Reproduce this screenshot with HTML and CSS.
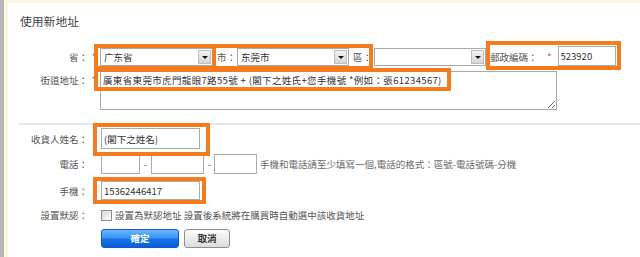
FILE: index.html
```html
<!DOCTYPE html>
<html lang="zh-Hant">
<head>
<meta charset="utf-8">
<title>使用新地址</title>
<link rel="stylesheet" href="styles.css">
</head>
<body>
<div class="frame">
  <div class="page">
    <h2 class="title">使用新地址</h2>

    <div class="row r1">
      <span class="label">省：</span><span class="star">*</span>
      <div class="select s1"><span class="val">广东省</span><span class="arrow"></span></div>
      <span class="sublabel">市：</span>
      <div class="select s2"><span class="val">东莞市</span><span class="arrow"></span></div>
      <span class="sublabel">區：</span>
      <div class="select s3"><span class="val"></span><span class="arrow"></span></div>
      <span class="sublabel zip">郵政編碼：</span><span class="star zipstar">*</span>
      <input class="inp zipinp" type="text" value="523920">
    </div>

    <div class="row r2">
      <span class="label">街道地址：</span><span class="star">*</span>
      <textarea class="street">廣東省東莞市虎門龍眼7路55號 + (閣下之姓氏+您手機號 *例如：張61234567)</textarea>
    </div>

    <div class="sep"></div>

    <div class="row r3">
      <span class="label">收貨人姓名：</span><span class="star"></span>
      <input class="inp name" type="text" value="(閣下之姓名)">
    </div>

    <div class="row r4">
      <span class="label">電話：</span><span class="star"></span>
      <input class="inp ph1" type="text">
      <span class="dash">-</span>
      <input class="inp ph2" type="text">
      <span class="dash">-</span>
      <input class="inp ph3" type="text">
      <span class="hint">手機和電話請至少填寫一個,電話的格式：區號-電話號碼-分機</span>
    </div>

    <div class="row r5">
      <span class="label">手機：</span><span class="star"></span>
      <input class="inp mobile" type="text" value="15362446417">
    </div>

    <div class="row r6">
      <span class="label">設置默認：</span><span class="star"></span>
      <input class="chk" type="checkbox">
      <span class="chktext">設置為默認地址 設置後系統將在購買時自動選中該收貨地址</span>
    </div>

    <div class="row r7">
      <span class="label"></span><span class="star"></span>
      <button class="btn ok">確定</button>
      <button class="btn cancel">取消</button>
    </div>
  </div>

  <span class="mark m1"></span>
  <span class="mark m2"></span>
  <span class="mark m3"></span>
  <span class="mark m4"></span>
  <span class="mark m5"></span>
  <span class="mark m6"></span>
</div>
</body>
</html>
```

FILE: styles.css
```css
* { box-sizing: border-box; }

html, body {
  margin: 0;
  background: #fff;
}

body {
  font-family: "Noto Sans CJK TC", "Noto Sans CJK SC", "Liberation Sans", sans-serif;
  font-size: 9.5px;
  color: #555;
}

.frame {
  position: relative;
  height: 257px;
  overflow: hidden;
  border-left: 4px solid #b6b6b6;
}

.page {
  height: 100%;
  border-left: 4px solid #fdf6e1;
  border-top: 3px solid #fdf6e1;
}

.title {
  margin: 10px 0 0 12px;
  font-size: 11.8px;
  font-weight: normal;
  line-height: 16px;
  color: #444;
}

.row {
  display: flex;
  align-items: center;
}

.label {
  flex: none;
  width: 80px;
  text-align: right;
  line-height: 16px;
  white-space: nowrap;
}

.star {
  flex: none;
  width: 12px;
  text-align: center;
  color: #e5493a;
  line-height: 16px;
}

/* row 1 */
.r1 {
  margin-top: 17px;
  height: 20px;
  align-items: flex-end;
}
.r1 .label, .r1 .star, .r1 .sublabel { line-height: 18px; }

.select {
  flex: none;
  display: flex;
  align-items: center;
  height: 18px;
  border: 1px solid #a9a9a9;
  background: #fff;
}
.s1 { width: 113px; }
.s2 { width: 112px; }
.s3 { width: 112px; }

.select .val {
  flex: 1;
  padding-left: 3px;
  color: #333;
  line-height: 16px;
  white-space: nowrap;
}

.arrow {
  flex: none;
  width: 13px;
  height: 14px;
  margin-right: 1px;
  border: 1px solid #bdbdbd;
  background: linear-gradient(#f3f3f3, #d6d6d6);
  display: flex;
  align-items: center;
  justify-content: center;
}
.arrow::after {
  content: "";
  border-left: 3px solid transparent;
  border-right: 3px solid transparent;
  border-top: 3px solid #111;
}

.sublabel {
  flex: none;
  padding-left: 4px;
  width: 24px;
  white-space: nowrap;
}
.sublabel + .s3 { margin-left: 1px; }
.zip { width: auto; }
.zipstar {
  width: 20px;
  text-align: right;
  padding-right: 6px;
  line-height: 18px;
}

.inp {
  flex: none;
  margin: 0;
  border: 1px solid #aaa;
  padding: 0 2px;
  font: inherit;
  color: #333;
  background: #fff;
  outline: none;
}
.zipinp { width: 58px; height: 20px; }

/* row 2 */
.r2 {
  margin-top: 5px;
  align-items: flex-start;
}
.r2 .label, .r2 .star { padding-top: 1px; }

.street {
  flex: none;
  display: block;
  margin: 0;
  width: 457px;
  height: 39px;
  border: 1px solid #aaa;
  padding: 1px 2px;
  font: inherit;
  line-height: 14px;
  letter-spacing: 0.35px;
  color: #333;
  resize: both;
  overflow: hidden;
  white-space: nowrap;
}

.sep {
  margin: 13px 0 0 10px;
  height: 2px;
  background: #e8e8e8;
}

/* row 3 */
.r3 { margin-top: 3px; height: 21px; }
.name { width: 99px; height: 21px; margin-left: 1px; }

/* row 4 */
.r4 { margin-top: 5px; height: 20px; }
.ph1 { width: 39px; height: 20px; margin-left: 1px; }
.ph2 { width: 53px; height: 20px; }
.ph3 { width: 43px; height: 20px; }
.dash {
  flex: none;
  width: 11px;
  text-align: center;
  color: #666;
}
.dash + .ph3 { margin-left: -1px; }
.hint {
  margin-left: 3px;
  color: #6a6a6a;
  white-space: nowrap;
}

/* row 5 */
.r5 { margin-top: 7px; height: 19px; }
.mobile { width: 99px; height: 19px; margin-left: 1px; }

/* row 6 */
.r6 { margin-top: 8px; height: 14px; }
.chk {
  appearance: none;
  -webkit-appearance: none;
  flex: none;
  margin: 0 0 0 1px;
  width: 11px;
  height: 11px;
  border: 1px solid #8f8f8f;
  background: linear-gradient(135deg, #d9d9d9, #fafafa);
}
.chktext {
  margin-left: 3px;
  white-space: nowrap;
}

/* row 7 */
.r7 { margin-top: 7px; height: 19px; }
.btn {
  flex: none;
  height: 19px;
  margin: 0;
  padding: 0;
  border-radius: 3px;
  font: inherit;
  font-weight: bold;
  line-height: 17px;
  cursor: pointer;
}
.ok {
  width: 78px;
  margin-left: 1px;
  border: 1px solid #1858c6;
  background: linear-gradient(#6ab6ff 0%, #3d95f4 45%, #1770e6 55%, #0b5ed8 100%);
  color: #fff;
}
.cancel {
  width: 46px;
  margin-left: 5px;
  border: 1px solid #8e8e8e;
  background: linear-gradient(#fdfdfd, #dcdcdc);
  color: #333;
}

/* orange annotation frames drawn over the form */
.mark {
  position: absolute;
  border: 4px solid #f57b1f;
  pointer-events: none;
}
.m1 { left: 90px; top: 44px; width: 122px; height: 26px; }
.m2 { left: 208px; top: 44px; width: 161px; height: 26px; }
.m3 { left: 482px; top: 41px; width: 135px; height: 29px; }
.m4 { left: 90px; top: 68px; width: 357px; height: 23px; }
.m5 { left: 89px; top: 123px; width: 117px; height: 33px; }
.m6 { left: 89px; top: 177px; width: 113px; height: 27px; }
```
